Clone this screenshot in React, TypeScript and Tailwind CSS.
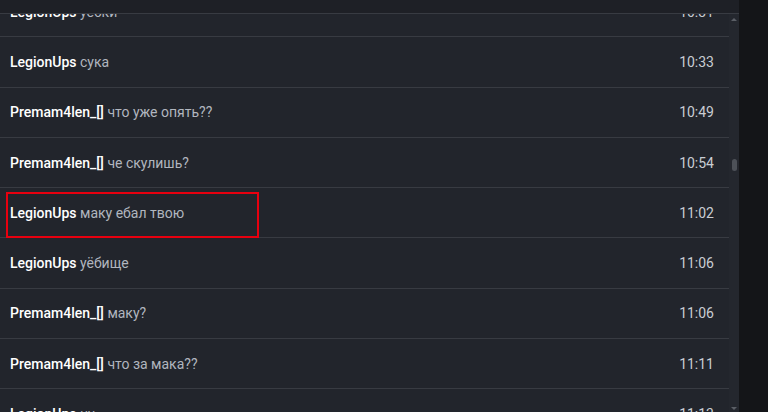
import React from "react";

type Msg = { name: string; text: string; time: string };

const messages: Msg[] = [
  { name: "LegionUps", text: "уебки", time: "10:31" },
  { name: "LegionUps", text: "сука", time: "10:33" },
  { name: "Premam4len_[]", text: "что уже опять??", time: "10:49" },
  { name: "Premam4len_[]", text: "че скулишь?", time: "10:54" },
  { name: "LegionUps", text: "маку ебал твою", time: "11:02" },
  { name: "LegionUps", text: "уёбище", time: "11:06" },
  { name: "Premam4len_[]", text: "маку?", time: "11:06" },
  { name: "Premam4len_[]", text: "что за мака??", time: "11:11" },
  { name: "LegionUps", text: "ну", time: "11:13" },
];

function Row({ m, marked }: { m: Msg; marked?: boolean }) {
  return (
    <div className="relative flex h-[50.3px] shrink-0 items-center justify-between border-b border-[#383b42] pl-[10px] pr-[15px]">
      <div className="text-[14px] leading-none">
        <span className="font-medium text-white">{m.name}</span>{" "}
        <span className="text-[#b1b6bf]">{m.text}</span>
      </div>
      <div className="text-[14px] leading-none text-[#c9cdd3]">{m.time}</div>
      {marked && (
        <div className="pointer-events-none absolute left-[6px] top-[4px] h-[46px] w-[253px] border-2 border-[#e8000f]" />
      )}
    </div>
  );
}

export default function App() {
  return (
    <div
      className="flex h-[412px] w-[768px] overflow-hidden bg-[#141518]"
      style={{ fontFamily: 'Roboto, "Open Sans", sans-serif' }}
    >
      <div className="flex w-[739px] flex-col bg-[#22252c]">
        <div className="relative z-10 h-[14px] shrink-0 border-b border-[#383b42] bg-[#1e2026]" />
        <div className="flex min-h-0 flex-1">
          <div className="flex min-w-0 flex-1 flex-col overflow-hidden">
            <div className="-mt-[27px] flex flex-col">
              {messages.map((m, i) => (
                <Row key={i} m={m} marked={i === 4} />
              ))}
            </div>
          </div>
          <div className="relative w-[10px] shrink-0 bg-[#24272e]">
            <div className="absolute left-[2px] top-[4px] h-0 w-0 border-x-[3px] border-b-[3px] border-x-transparent border-b-[#5b5f66]" />
            <div className="absolute left-[3px] top-[145px] h-[12px] w-[5px] rounded-full bg-[#4d5158]" />
            <div className="absolute bottom-[2px] left-[2px] h-0 w-0 border-x-[3px] border-t-[3px] border-x-transparent border-t-[#5b5f66]" />
          </div>
        </div>
      </div>
    </div>
  );
}
